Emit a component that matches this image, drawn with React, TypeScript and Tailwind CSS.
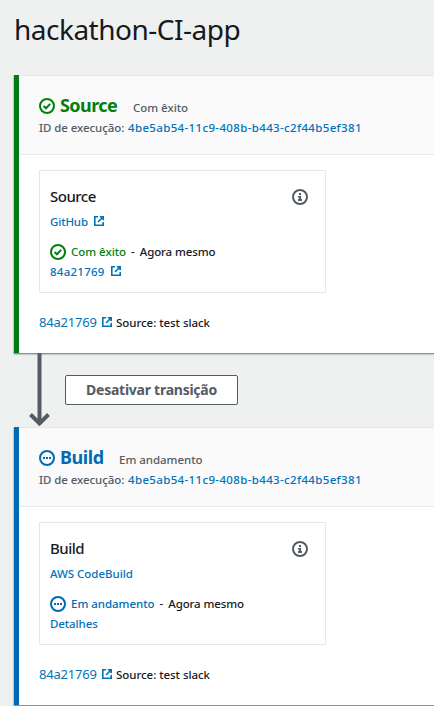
import React from "react";

type Status = "success" | "progress";

function StatusIcon({ status }: { status: Status }) {
  return (
    <svg className="block shrink-0" width="16" height="16" viewBox="0 0 16 16" fill="none" stroke="currentColor" strokeWidth="2">
      <circle cx="8" cy="8" r="7" />
      {status === "success" ? (
        <path d="M4.6 8.1 7 10.3l4.2-4.4" />
      ) : (
        <path d="M4 8h2M7 8h2M10 8h2" />
      )}
    </svg>
  );
}

function ExternalIcon() {
  return (
    <svg className="relative -top-px block shrink-0" width="10" height="10" viewBox="0 0 10 10" fill="none" stroke="currentColor" strokeWidth="1.6">
      <path d="M4 .8H.8v8.400h8.400V6" />
      <path d="M5.800.8h3.400v3.400M9 1 4 6" />
    </svg>
  );
}

function InfoIcon() {
  return (
    <svg className="block" width="16" height="16" viewBox="0 0 16 16" fill="none">
      <circle cx="8" cy="8" r="7" stroke="#545b64" strokeWidth="2" />
      <path d="M7 4h2v2H7zM6 7h3v3h1v2H6v-2h1V8.500H6z" fill="#545b64" />
    </svg>
  );
}

interface StageProps {
  name: string;
  status: Status;
  label: string;
  nameClass: string;
  provider: React.ReactNode;
  details: React.ReactNode;
}

function Stage({ name, status, label, nameClass, provider, details }: StageProps) {
  const ok = status === "success";
  const color = ok ? "text-[#037f0c]" : "text-[#006bb4]";
  return (
    <section
      className={`h-[278px] border-l-[5px] bg-white shadow-[0_1px_0_0_#8a9495,0_2px_1px_0_rgba(0,28,36,0.15),-1px_1px_1px_0_rgba(0,28,36,0.15)] ${
        ok ? "border-[#007a15]" : "border-[#006bb4]"
      }`}
    >
      <header className="h-20 border-y border-[#e6e9e9] bg-[#fafafa] pt-5 pl-5">
        <div className={`flex h-5 items-center ${color}`}>
          <StatusIcon status={status} />
          <h2 className={`relative -top-px ml-[5px] text-[18px] leading-5 font-bold ${nameClass}`}>{name}</h2>
          <span className="relative top-[2px] text-[11.5px] font-medium tracking-[-0.03px] text-[#545b64]">{label}</span>
        </div>
        <div className="mt-[2px] flex h-5 items-center text-[11.5px] leading-5 font-medium">
          <span className="w-[89px] tracking-[-0.08px] text-[#545b64]">ID de execução:</span>
          <a className="tracking-[0.35px] text-[#0073bb]">4be5ab54-11c9-408b-b443-c2f44b5ef381</a>
        </div>
      </header>
      <div className="pt-[15px] pl-5 text-[11.5px] leading-5 font-medium tracking-[-0.03px] text-[#16191f]">
        <article className="h-[123px] w-[287px] border border-[#e6e9e9] pt-4 pl-[10px]">
          <div className="flex h-5 items-center justify-between pr-[17px]">
            <h3 className="relative -top-px text-[15px] font-medium tracking-[-0.5px]">{name}</h3>
            <InfoIcon />
          </div>
          <div className="mt-[5px] flex h-5 items-center text-[#0073bb]">{provider}</div>
          <div className="mt-[10px] flex h-5 items-center">
            <span className={`flex items-center gap-[5px] ${color}`}>
              <StatusIcon status={status} />
              <span>{label}</span>
            </span>
            <span className="mx-[5px]">-</span>
            <span className="tracking-[-0.12px]">Agora mesmo</span>
          </div>
          <div className="flex h-5 items-center text-[#0073bb]">{details}</div>
        </article>
        <div className="mt-5 flex h-5 items-center">
          <a className="flex w-[78px] items-center text-[#0073bb]">
            <span className="relative -top-px w-[63px] text-[13px] font-normal tracking-[-0.2px]">84a21769</span>
            <ExternalIcon />
          </a>
          <span className="-ml-px tracking-[-0.05px]">Source: test slack</span>
        </div>
      </div>
    </section>
  );
}

export default function App() {
  return (
    <main className="h-[706px] w-full overflow-hidden bg-[#eff1f1] pl-[14px] font-['Noto_Sans',sans-serif]">
      <h1 className="h-[75px] pt-[11px] text-[28px] leading-9 font-[450] tracking-[-0.5px] text-[#16191f]">hackathon-CI-app</h1>
      <Stage
        name="Source"
        status="success"
        label="Com êxito"
        nameClass="w-[73px] tracking-[-0.55px]"
        provider={<><span className="w-[44px] tracking-[-0.15px]">GitHub</span><ExternalIcon /></>}
        details={<><span className="w-[61px] tracking-[0.25px]">84a21769</span><ExternalIcon /></>}
      />
      <div className="flex h-[74px]">
        <svg className="ml-[14px] block shrink-0" width="23" height="74" viewBox="0 0 23 74" fill="none" stroke="#545b64">
          <path d="M11.500 0v71" strokeWidth="4" />
          <path d="M2.500 61.500l9 9 9-9" strokeWidth="4" />
        </svg>
        <button className="mt-[22px] ml-[14px] h-[30px] w-[173px] rounded-[2px] border border-[#545b64] bg-white text-[14px] leading-5 font-bold tracking-[-0.25px] text-[#545b64]">
          Desativar transição
        </button>
      </div>
      <Stage
        name="Build"
        status="progress"
        label="Em andamento"
        nameClass="w-[59px] tracking-[-0.4px]"
        provider={<span>AWS CodeBuild</span>}
        details={<span className="tracking-[-0.1px]">Detalhes</span>}
      />
    </main>
  );
}
